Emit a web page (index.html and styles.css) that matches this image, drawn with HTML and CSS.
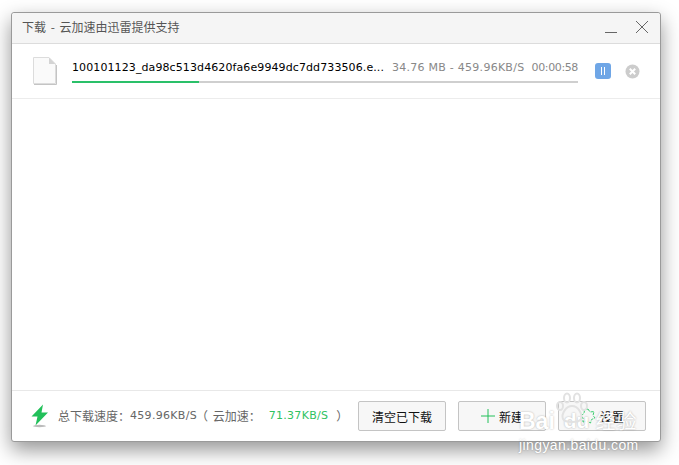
FILE: index.html
```html
<!DOCTYPE html>
<html lang="zh">
<head>
<meta charset="utf-8">
<title>下载</title>
<link rel="stylesheet" href="styles.css">
</head>
<body>
<div class="window">
  <header class="titlebar">
    <span class="title">下载 - 云加速由迅雷提供支持</span>
    <div class="win-controls">
      <svg class="win-icon" width="14" height="14" viewBox="0 0 14 14"><path d="M0 12.5H12" stroke="#666" stroke-width="1"/></svg>
      <svg class="win-icon" width="14" height="14" viewBox="0 0 14 14"><path d="M1 1L13 13M13 1L1 13" stroke="#666" stroke-width="1"/></svg>
    </div>
  </header>
  <main class="list">
    <div class="row">
      <svg class="file-icon" width="24" height="28" viewBox="0 0 24 28">
        <path d="M0.5 0.5H16L22.5 7V26.5H0.5Z" fill="#fafafa" stroke="#dcdcdc"/>
        <path d="M1 27.5H23.5V8" fill="none" stroke="#c4c4c4"/>
        <path d="M16 0.5V7H22.5Z" fill="#d4d4d4"/>
      </svg>
      <div class="info">
        <div class="info-text">
          <span class="name">100101123_da98c513d4620fa6e9949dc7dd733506.e...</span>
          <span class="stats">34.76 MB - 459.96KB/S</span>
          <span class="stats time">00:00:58</span>
        </div>
        <div class="progress"><div class="progress-fill" style="width:25%"></div></div>
      </div>
      <div class="pause"><span class="pause-bar"></span><span class="pause-bar"></span></div>
      <svg class="cancel" width="15" height="15" viewBox="0 0 15 15">
        <circle cx="7.5" cy="7.5" r="7" fill="#ccc"/>
        <path d="M4.8 4.8L10.2 10.2M10.2 4.8L4.8 10.2" stroke="#fff" stroke-width="2"/>
      </svg>
    </div>
  </main>
  <footer class="footer">
    <svg class="bolt" width="18" height="24" viewBox="0 0 18 24">
      <ellipse cx="8.5" cy="22" rx="6.5" ry="1.2" fill="#bbb"/>
      <path d="M12 0.5L0.5 12.5H6.5L4.5 21.5L17 8.5H10.5L12 0.5Z" fill="#22c05a"/>
    </svg>
    <div class="speed">
      <span class="cjk">总下载速度：</span><span class="num">459.96KB/S</span>
      <span class="cjk paren">（ 云加速：</span>
      <span class="num green">71.37KB/S</span>
      <span class="cjk close-paren">）</span>
    </div>
    <div class="buttons">
      <button class="btn">清空已下载</button>
      <button class="btn">
        <svg width="14" height="14" viewBox="0 0 14 14"><path d="M7 0V14M0 7H14" stroke="#22c05a" stroke-width="1"/></svg>
        新建
      </button>
      <button class="btn">
        <svg width="16" height="16" viewBox="0 0 16 16"><path d="M8 1L10 4L14 3.5L13 7.5L15 10L11.5 11.5L10.5 15L7 13L3 14L3 10L1 7.5L4 5.5L4.5 2Z" fill="none" stroke="#3ccf72" stroke-width="1" stroke-dasharray="3 1.2"/></svg>
        设置
      </button>
    </div>
  </footer>
  <div class="watermark">
    <div class="wm-top">
      <span>Bai</span><span class="wm-du">du</span><span class="wm-cn">经验</span>
      <svg class="wm-paw" width="34" height="32" viewBox="0 0 34 32"><g fill="none" stroke="#e2e2e2" stroke-width="2"><ellipse cx="5" cy="14" rx="3" ry="4"/><ellipse cx="12" cy="6" rx="3" ry="4.5"/><ellipse cx="22" cy="6" rx="3" ry="4.5"/><ellipse cx="29" cy="14" rx="3" ry="4"/><path d="M17 14C11 14 6 22 8 27C10 31 24 31 26 27C28 22 23 14 17 14Z"/></g></svg>
    </div>
    <div class="wm-url">jingyan.baidu.com</div>
  </div>
</div>
</body>
</html>
```
FILE: styles.css
```css
html, body {
  margin: 0;
  padding: 0;
  height: 100%;
  background: #fff;
  overflow: hidden;
}
body {
  padding: 12px 0 0 11px;
  box-sizing: border-box;
  font-family: "Noto Sans CJK SC", "Liberation Sans", sans-serif;
}
.window {
  position: relative;
  width: 650px;
  height: 430px;
  box-sizing: border-box;
  border: 1px solid #9a9a9a;
  border-radius: 3px;
  background: #fff;
  box-shadow: 0 8px 20px rgba(0, 0, 0, .42);
  display: flex;
  flex-direction: column;
}
.titlebar {
  height: 30px;
  flex: none;
  background: #f5f5f5;
  border-bottom: 1px solid #dcdcdc;
  display: flex;
  align-items: center;
  justify-content: space-between;
  padding: 0 11px 0 10px;
  border-radius: 3px 3px 0 0;
}
.title {
  font-size: 12px;
  color: #555;
  word-spacing: 2px;
  line-height: 14px;
  margin-top: -2px;
}
.win-controls {
  display: flex;
  gap: 16px;
  margin-top: -2px;
}
.list {
  flex: 1;
}
.row {
  height: 54px;
  box-sizing: content-box;
  border-bottom: 1px solid #ececec;
  display: flex;
  align-items: center;
  padding-left: 21px;
}
.file-icon {
  flex: none;
  margin-right: 15px;
}
.info {
  width: 506px;
  flex: none;
  margin-top: 2px;
}
.info-text {
  display: flex;
  align-items: baseline;
  height: 18px;
  white-space: nowrap;
  font-family: "DejaVu Sans", sans-serif;
  font-size: 11px;
}
.name {
  color: #000;
  width: 320px;
  flex: none;
  letter-spacing: .1px;
}
.stats {
  color: #888;
  letter-spacing: .26px;
}
.time {
  margin-left: auto;
  letter-spacing: -.37px;
}
.progress {
  height: 2px;
  margin-top: 2px;
  background: #cfcfcf;
}
.progress-fill {
  height: 2px;
  background: #2ac069;
}
.pause {
  flex: none;
  width: 16px;
  height: 16px;
  margin-left: 17px;
  background: #6fa6e6;
  border-radius: 3px;
  display: flex;
  align-items: center;
  justify-content: center;
  gap: 2px;
}
.pause-bar {
  width: 1px;
  height: 8px;
  background: #fff;
}
.cancel {
  flex: none;
  margin-left: 14px;
}
.footer {
  height: 51px;
  flex: none;
  box-sizing: border-box;
  border-top: 1px solid #e8e8e8;
  display: flex;
  align-items: center;
  padding: 0 14px 0 19px;
}
.bolt {
  flex: none;
  margin-right: 9px;
}
.speed {
  display: flex;
  align-items: center;
  white-space: nowrap;
  color: #666;
  margin-top: -1px;
}
.cjk {
  font-size: 12px;
  font-family: "Noto Sans CJK SC", sans-serif;
}
.num {
  font-size: 11px;
  font-family: "DejaVu Sans", sans-serif;
  letter-spacing: .3px;
}
.paren {
  margin-left: -1px;
  word-spacing: 2px;
}
.green {
  color: #2fc25f;
  margin-left: 8px;
}
.close-paren {
  margin-left: 8px;
}
.buttons {
  margin-left: auto;
  display: flex;
  gap: 12px;
}
.btn {
  width: 88px;
  height: 30px;
  box-sizing: border-box;
  border: 1px solid #c4c4c4;
  border-radius: 2px;
  background: #f7f7f7;
  font-family: "Noto Sans CJK SC", sans-serif;
  font-size: 12px;
  color: #111;
  padding: 0;
  display: flex;
  align-items: center;
  justify-content: center;
  gap: 4px;
}
.watermark {
  position: absolute;
  left: 507px;
  top: 394px;
  width: 122px;
  color: #fff;
  font-family: "Liberation Sans", sans-serif;
  pointer-events: none;
  text-shadow: 0 0 2px rgba(0, 0, 0, .3);
}
.wm-top {
  position: relative;
  display: flex;
  align-items: center;
  font-size: 23px;
  font-weight: 700;
  height: 28px;
  line-height: 28px;
}
.wm-du {
  font-size: 21px;
  margin-left: 9px;
}
.wm-cn {
  font-size: 20px;
  font-weight: 400;
  margin-left: 6px;
  letter-spacing: 1px;
  font-family: "Noto Sans CJK SC", sans-serif;
}
.wm-paw {
  position: absolute;
  left: 36px;
  top: -15px;
}
.wm-url {
  font-size: 14px;
  letter-spacing: .4px;
  margin-top: 2px;
  white-space: nowrap;
}
```
